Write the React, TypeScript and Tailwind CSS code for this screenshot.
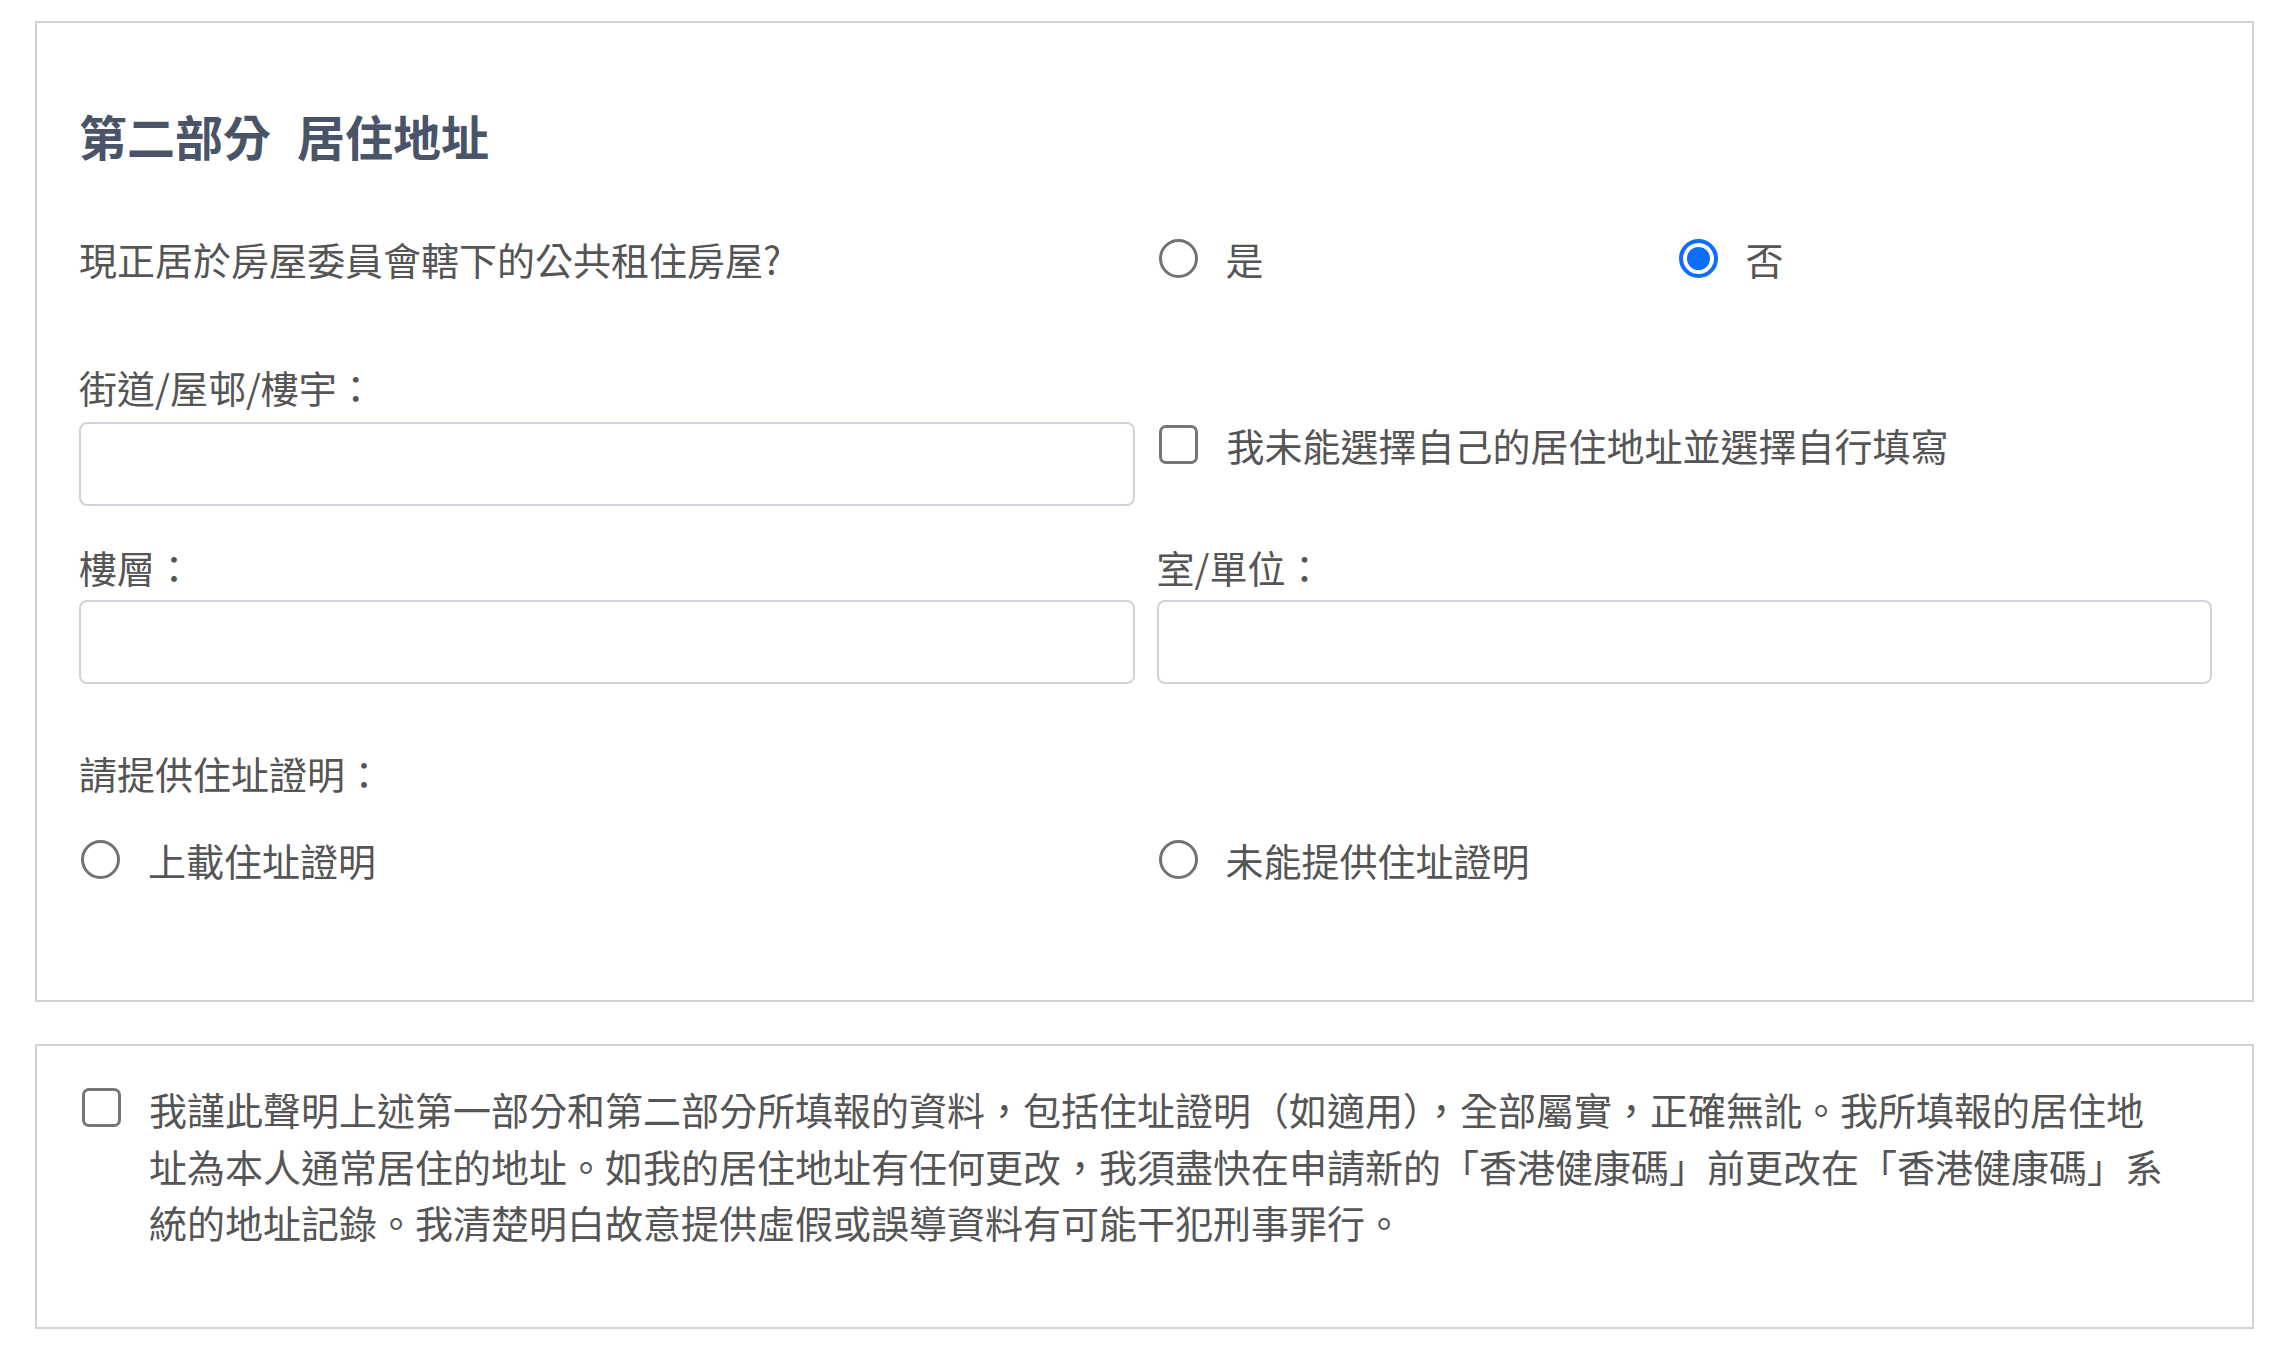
import React from "react";

function Radio({ checked = false }: { checked?: boolean }) {
  if (checked) {
    return (
      <span className="flex h-[39px] w-[39px] shrink-0 items-center justify-center rounded-full border-[4px] border-[#0d6efd]">
        <span className="h-[23px] w-[23px] rounded-full bg-[#0d6efd]" />
      </span>
    );
  }
  return <span className="h-[39px] w-[39px] shrink-0 rounded-full border-[3px] border-[#727272]" />;
}

function Checkbox() {
  return <span className="block h-[39px] w-[39px] shrink-0 rounded-[7px] border-[3px] border-[#767676]" />;
}

function Option({ label, checked }: { label: string; checked?: boolean }) {
  return (
    <label className="flex h-[57px] items-center gap-[28px] pl-[2px]">
      <Radio checked={checked} />
      <span>{label}</span>
    </label>
  );
}

function TextField() {
  return (
    <input
      type="text"
      className="block h-[84px] w-full rounded-[8px] border-2 border-[#ced4da] bg-white px-4 outline-none"
    />
  );
}

export default function App() {
  return (
    <div className="min-h-screen bg-white pt-[21px] pl-[35px] font-['Noto_Sans_CJK_TC','Noto_Sans',sans-serif] text-[38px] leading-[57px] text-[#555555]">
      {/* 第二部分 */}
      <section className="w-[2219px] border-2 border-[#d3d3d3] pt-[83px] pb-[112px] pl-[42px] pr-[40px]">
        <h2 className="h-[58px] text-[48px] leading-[58px] font-bold text-[#4a5468]">
          第二部分<span className="ml-[26px]">居住地址</span>
        </h2>

        <div className="mt-[66px] grid grid-cols-2 gap-x-[22px]">
          <p className="h-[57px]">現正居於房屋委員會轄下的公共租住房屋?</p>
          <div className="flex">
            <div className="w-[520px]">
              <Option label="是" />
            </div>
            <Option label="否" checked />
          </div>
        </div>

        <div className="mt-[71px] grid grid-cols-2 gap-x-[22px]">
          <div>
            <p className="h-[57px]">街道/屋邨/樓宇：</p>
            <div className="mt-[7px]">
              <TextField />
            </div>
          </div>
          <div className="pt-[67px]">
            <label className="flex h-[39px] items-center gap-[29px] pl-[2px]">
              <Checkbox />
              <span>我未能選擇自己的居住地址並選擇自行填寫</span>
            </label>
          </div>
        </div>

        <div className="mt-[32px] grid grid-cols-2 gap-x-[22px]">
          <div>
            <p className="h-[57px]">樓層：</p>
            <div className="mt-[5px]">
              <TextField />
            </div>
          </div>
          <div>
            <p className="h-[57px]">室/單位：</p>
            <div className="mt-[5px]">
              <TextField />
            </div>
          </div>
        </div>

        <p className="mt-[60px] h-[57px]">請提供住址證明：</p>
        <div className="mt-[30px] grid grid-cols-2 gap-x-[22px]">
          <Option label="上載住址證明" />
          <Option label="未能提供住址證明" />
        </div>
      </section>

      {/* 聲明 */}
      <section className="mt-[42px] w-[2219px] border-2 border-[#d3d3d3] pt-[35px] pb-[76px] pl-[45px] pr-[76px]">
        <label className="flex items-start gap-[28px]">
          <span className="mt-[7px] shrink-0">
            <Checkbox />
          </span>
          <span className="min-w-0 flex-1 leading-[56.5px]">
            我謹此聲明上述第一部分和第二部分所填報的資料，包括住址證明（如適用），全部屬實，正確無訛。我所填報的居住地址為本人通常居住的地址。如我的居住地址有任何更改，我須盡快在申請新的「香港健康碼」前更改在「香港健康碼」系統的地址記錄。我清楚明白故意提供虛假或誤導資料有可能干犯刑事罪行。
          </span>
        </label>
      </section>
    </div>
  );
}
